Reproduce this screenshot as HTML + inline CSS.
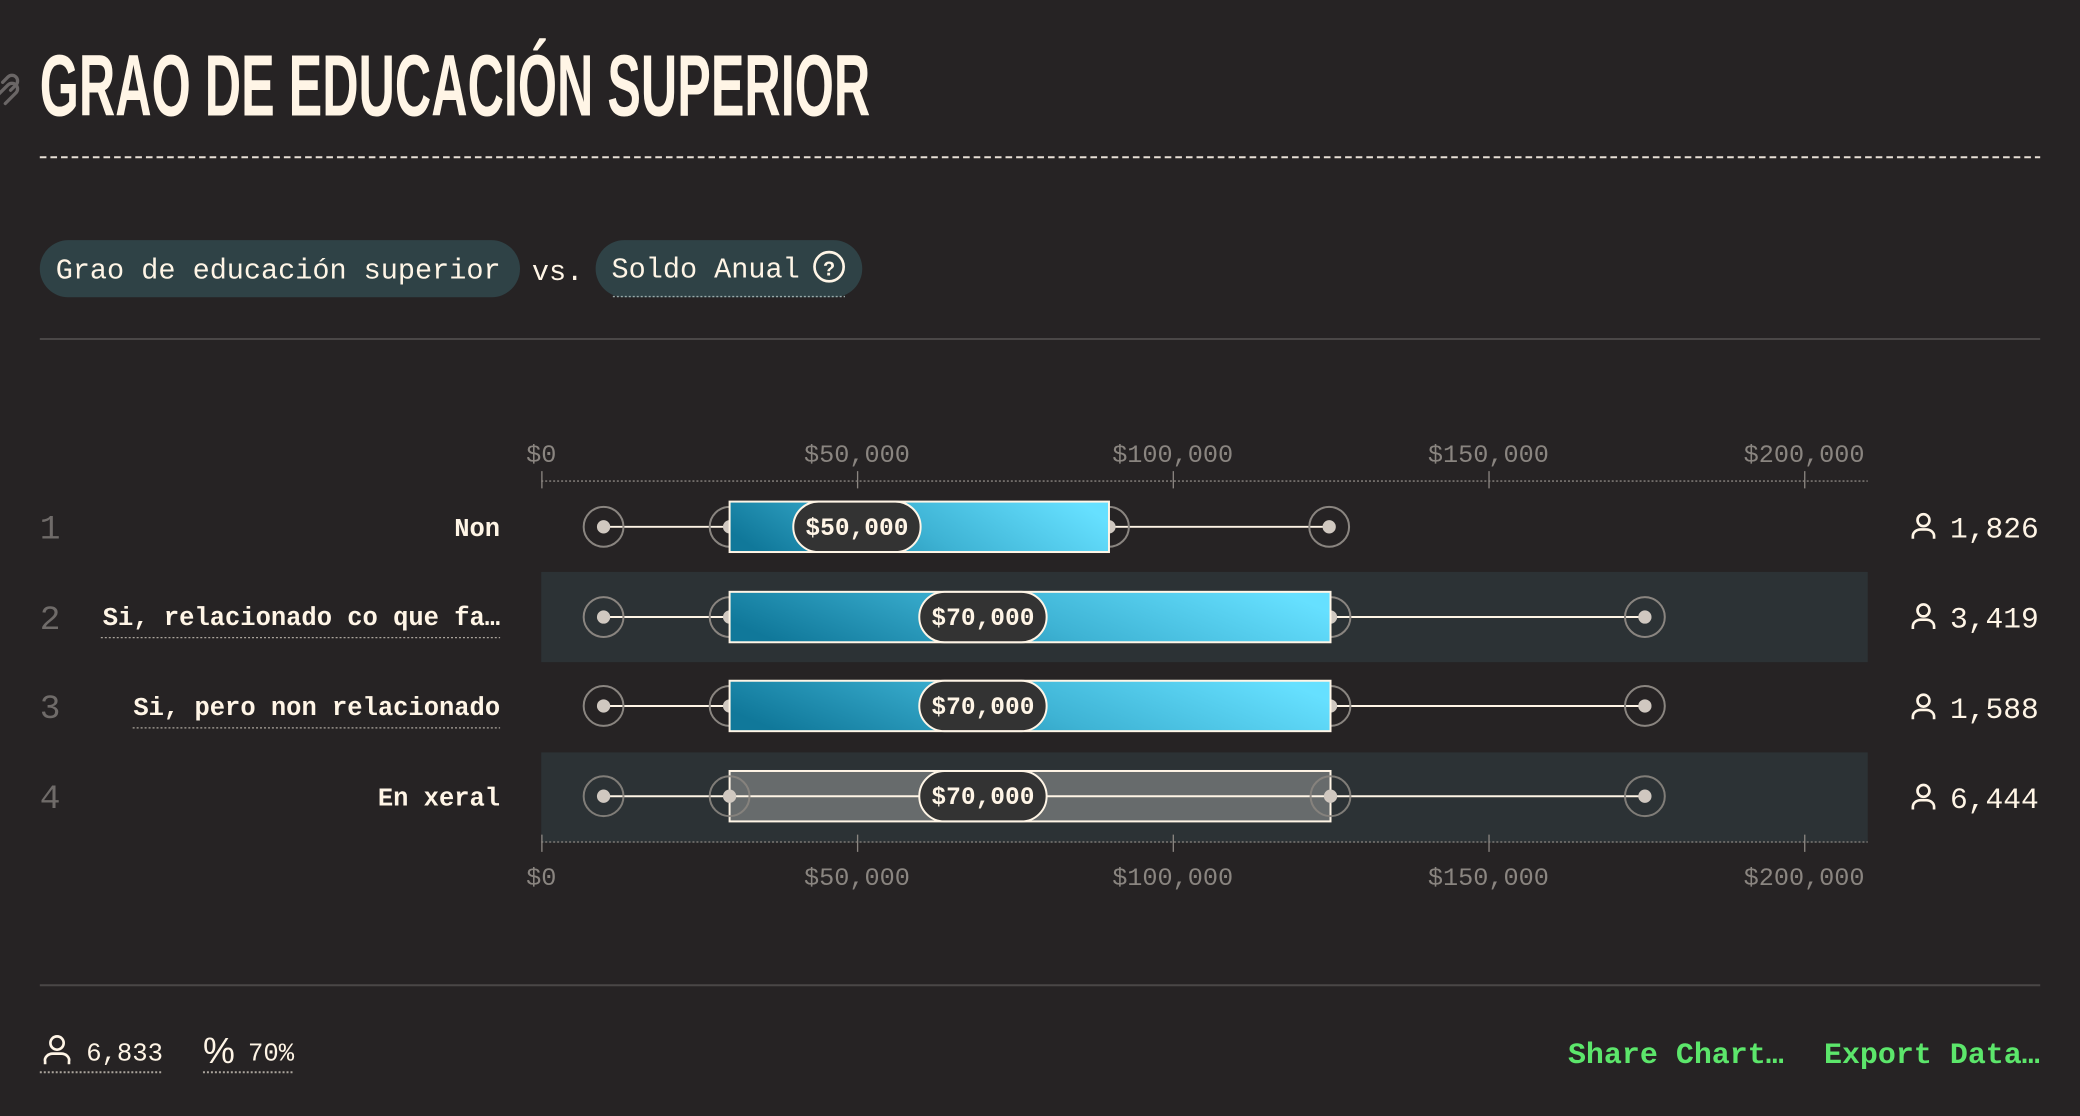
<!DOCTYPE html>
<html><head><meta charset="utf-8"><style>
html,body{margin:0;padding:0;background:#262324;width:2080px;height:1116px;overflow:hidden}
svg{display:block}
.m{font-family:"Liberation Mono",monospace}
</style></head><body>
<svg width="2080" height="1116" viewBox="0 0 1568 841" preserveAspectRatio="none" xmlns="http://www.w3.org/2000/svg">
<defs>
<linearGradient id="g" x1="0" y1="0.6" x2="1" y2="0.4">
<stop offset="0" stop-color="#10789a"/><stop offset="0.5" stop-color="#3eb3d4"/><stop offset="1" stop-color="#66e0ff"/>
</linearGradient>
</defs>
<rect width="1568" height="841" fill="#262324"/>
<g stroke="#6a6666" stroke-width="2.5" fill="none" stroke-linecap="round">
<path d="M-2 72 L6 64 a4 4 0 0 1 6 6 L4 78"/><path d="M2 62 l4 -4 a4 4 0 0 1 6 6 l-4 4"/>
</g>
<text x="30" y="87" fill="#fff5e6" font-family="'Liberation Sans Narrow','Liberation Sans',sans-serif" font-weight="bold" font-size="66" textLength="626" lengthAdjust="spacingAndGlyphs">GRAO DE EDUCACIÓN SUPERIOR</text>
<line x1="30" y1="118.5" x2="1538" y2="118.5" stroke="#e8e0d6" stroke-width="1.5" stroke-dasharray="5 3"/>
<rect x="30" y="181" width="362" height="43" rx="21.5" fill="#2f4246"/>
<text x="42" y="210" class="m" font-size="21.5" fill="#fff5e6">Grao de educación superior</text>
<text x="401" y="211" class="m" font-size="21.5" fill="#fff5e6">vs.</text>
<rect x="449" y="181" width="201" height="43" rx="21.5" fill="#2f4246"/>
<path d="M462 223.5 H637" stroke="#9aa" stroke-width="1" stroke-dasharray="1.5 1.5"/>
<text x="461" y="209" class="m" font-size="21.5" fill="#fff5e6">Soldo Anual</text>
<circle cx="625" cy="201" r="11" fill="none" stroke="#fff5e6" stroke-width="2"/>
<text x="625" y="207.5" text-anchor="middle" font-family="'Liberation Sans',sans-serif" font-weight="bold" font-size="15" fill="#fff5e6">?</text>
<line x1="30" y1="255.5" x2="1538" y2="255.5" stroke="#4a4747" stroke-width="1.5"/>
<g class="m" font-size="19" fill="#8a8580" text-anchor="middle">
<text x="408" y="348">$0</text><text x="646" y="348">$50,000</text><text x="884" y="348">$100,000</text><text x="1122" y="348">$150,000</text><text x="1360" y="348">$200,000</text>
<text x="408" y="667">$0</text><text x="646" y="667">$50,000</text><text x="884" y="667">$100,000</text><text x="1122" y="667">$150,000</text><text x="1360" y="667">$200,000</text>
</g>
<rect x="408" y="431" width="1000" height="68" fill="#2c3235"/>
<rect x="408" y="567" width="1000" height="68" fill="#2c3235"/>
<g stroke="#8a8580" stroke-width="1">
<line x1="408" y1="362.5" x2="1408" y2="362.5" stroke-dasharray="1.5 1.5"/>
<line x1="408" y1="634.5" x2="1408" y2="634.5" stroke-dasharray="1.5 1.5"/>
<path d="M408.5 355v13M646.5 355v13M884.5 355v13M1122.5 355v13M1360.5 355v13"/>
<path d="M408.5 629v13M646.5 629v13M884.5 629v13M1122.5 629v13M1360.5 629v13"/>
</g>
<g class="m" font-size="26" fill="#6f6b69"><text x="30" y="406">1</text><text x="30" y="474">2</text><text x="30" y="541">3</text><text x="30" y="609">4</text></g>
<g class="m" font-size="19.2" font-weight="bold" fill="#fff5e6" text-anchor="end">
<text x="377" y="404">Non</text><text x="377" y="471">Si, relacionado co que fa…</text><text x="377" y="539">Si, pero non relacionado</text><text x="377" y="607">En xeral</text>
</g>
<g stroke="#aaa49c" stroke-width="1" stroke-dasharray="1.5 1.5"><line x1="76" y1="480.5" x2="377" y2="480.5"/><line x1="100" y1="548.5" x2="377" y2="548.5"/></g>

<g>
<line x1="455" y1="397" x2="1002" y2="397" stroke="#fff5e6" stroke-width="1.5"/>
<g fill="none" stroke="#8a8580" stroke-width="1.5"><circle cx="455" cy="397" r="15"/><circle cx="550" cy="397" r="15"/><circle cx="836" cy="397" r="15"/><circle cx="1002" cy="397" r="15"/></g>
<g fill="#d0c8c0"><circle cx="455" cy="397" r="5"/><circle cx="550" cy="397" r="5"/><circle cx="836" cy="397" r="5"/><circle cx="1002" cy="397" r="5"/></g>
<rect x="550" y="378" width="286" height="38" fill="url(#g)" stroke="#fff5e6" stroke-width="1.5"/>
<rect x="598" y="378" width="96" height="38" rx="19" fill="#333333" stroke="#fff5e6" stroke-width="1.5"/>
<text x="646" y="403" text-anchor="middle" class="m" font-weight="bold" font-size="18.5" fill="#fff5e6">$50,000</text>
</g>
<g>
<line x1="455" y1="465" x2="1240" y2="465" stroke="#fff5e6" stroke-width="1.5"/>
<g fill="none" stroke="#8a8580" stroke-width="1.5"><circle cx="455" cy="465" r="15"/><circle cx="550" cy="465" r="15"/><circle cx="1003" cy="465" r="15"/><circle cx="1240" cy="465" r="15"/></g>
<g fill="#d0c8c0"><circle cx="455" cy="465" r="5"/><circle cx="550" cy="465" r="5"/><circle cx="1003" cy="465" r="5"/><circle cx="1240" cy="465" r="5"/></g>
<rect x="550" y="446" width="453" height="38" fill="url(#g)" stroke="#fff5e6" stroke-width="1.5"/>
<rect x="693" y="446" width="96" height="38" rx="19" fill="#333333" stroke="#fff5e6" stroke-width="1.5"/>
<text x="741" y="471" text-anchor="middle" class="m" font-weight="bold" font-size="18.5" fill="#fff5e6">$70,000</text>
</g>
<g>
<line x1="455" y1="532" x2="1240" y2="532" stroke="#fff5e6" stroke-width="1.5"/>
<g fill="none" stroke="#8a8580" stroke-width="1.5"><circle cx="455" cy="532" r="15"/><circle cx="550" cy="532" r="15"/><circle cx="1003" cy="532" r="15"/><circle cx="1240" cy="532" r="15"/></g>
<g fill="#d0c8c0"><circle cx="455" cy="532" r="5"/><circle cx="550" cy="532" r="5"/><circle cx="1003" cy="532" r="5"/><circle cx="1240" cy="532" r="5"/></g>
<rect x="550" y="513" width="453" height="38" fill="url(#g)" stroke="#fff5e6" stroke-width="1.5"/>
<rect x="693" y="513" width="96" height="38" rx="19" fill="#333333" stroke="#fff5e6" stroke-width="1.5"/>
<text x="741" y="538" text-anchor="middle" class="m" font-weight="bold" font-size="18.5" fill="#fff5e6">$70,000</text>
</g>
<g>
<rect x="550" y="581" width="453" height="38" fill="#676b6c" stroke="#fff5e6" stroke-width="1.5"/>
<line x1="455" y1="600" x2="1240" y2="600" stroke="#fff5e6" stroke-width="1.5"/>
<g fill="none" stroke="#8a8580" stroke-width="1.5" opacity="0.9"><circle cx="455" cy="600" r="15"/><circle cx="550" cy="600" r="15"/><circle cx="1003" cy="600" r="15"/><circle cx="1240" cy="600" r="15"/></g>
<g fill="#d0c8c0"><circle cx="455" cy="600" r="5"/><circle cx="550" cy="600" r="5"/><circle cx="1003" cy="600" r="5"/><circle cx="1240" cy="600" r="5"/></g>
<rect x="693" y="581" width="96" height="38" rx="19" fill="#333333" stroke="#fff5e6" stroke-width="1.5"/>
<text x="741" y="606" text-anchor="middle" class="m" font-weight="bold" font-size="18.5" fill="#fff5e6">$70,000</text>
</g>
<g fill="none" stroke="#fff5e6" stroke-width="2">
<g transform="translate(1450,397)"><circle cx="0" cy="-5" r="4.5"/><path d="M-8 9 v-2 a6 5 0 0 1 6 -5 h4 a6 5 0 0 1 6 5 v2"/></g>
<g transform="translate(1450,465)"><circle cx="0" cy="-5" r="4.5"/><path d="M-8 9 v-2 a6 5 0 0 1 6 -5 h4 a6 5 0 0 1 6 5 v2"/></g>
<g transform="translate(1450,533)"><circle cx="0" cy="-5" r="4.5"/><path d="M-8 9 v-2 a6 5 0 0 1 6 -5 h4 a6 5 0 0 1 6 5 v2"/></g>
<g transform="translate(1450,601)"><circle cx="0" cy="-5" r="4.5"/><path d="M-8 9 v-2 a6 5 0 0 1 6 -5 h4 a6 5 0 0 1 6 5 v2"/></g>
<g transform="translate(43,792)"><circle cx="0" cy="-6" r="5"/><path d="M-9 10 v-2 a6 5 0 0 1 6 -6 h6 a6 5 0 0 1 6 6 v2"/></g>
</g>
<g class="m" font-size="22.3" fill="#fff5e6"><text x="1470" y="405">1,826</text><text x="1470" y="473">3,419</text><text x="1470" y="541">1,588</text><text x="1470" y="609">6,444</text></g>
<line x1="30" y1="742.5" x2="1538" y2="742.5" stroke="#4a4747" stroke-width="1.5"/>
<text x="65" y="799" class="m" font-size="19.3" fill="#fff5e6">6,833</text>
<text x="153" y="801" font-family="'Liberation Sans',sans-serif" font-size="27" fill="#fff5e6">%</text>
<text x="187" y="799" class="m" font-size="19.3" fill="#fff5e6">70%</text>
<g stroke="#aaa49c" stroke-width="1.5" stroke-dasharray="1.5 1.5"><line x1="30" y1="808" x2="123" y2="808"/><line x1="153" y1="808" x2="222" y2="808"/></g>
<g class="m" font-size="22.6" font-weight="bold" fill="#5ce66b"><text x="1182" y="801">Share Chart…</text><text x="1375" y="801">Export Data…</text></g>
</svg>
</body></html>
